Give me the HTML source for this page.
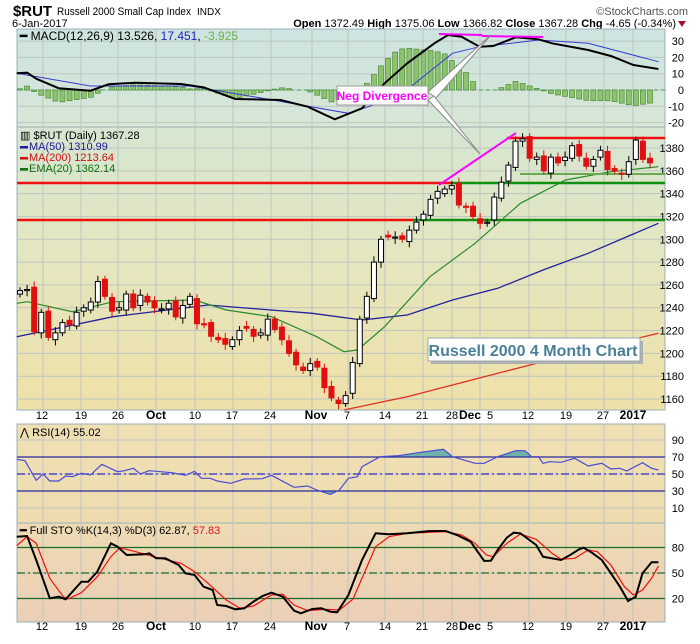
<!DOCTYPE html>
<html><head><meta charset="utf-8">
<style>
html,body{margin:0;padding:0;background:#fff;}
body{width:700px;height:639px;overflow:hidden;font-family:"Liberation Sans",sans-serif;}
svg text{font-family:"Liberation Sans",sans-serif;}
</style></head>
<body>
<svg id="s" width="700" height="639" viewBox="0 0 700 639" xmlns="http://www.w3.org/2000/svg">
<defs>
<linearGradient id="gm" x1="0" y1="0" x2="0" y2="1"><stop offset="0" stop-color="#cde4e0"/><stop offset="1" stop-color="#d7e6d6"/></linearGradient>
<linearGradient id="gp" x1="0" y1="0" x2="0" y2="1"><stop offset="0" stop-color="#d6e6d2"/><stop offset="0.45" stop-color="#e4e6c0"/><stop offset="1" stop-color="#efe0a8"/></linearGradient>
<linearGradient id="gr" x1="0" y1="0" x2="0" y2="1"><stop offset="0" stop-color="#efe0b4"/><stop offset="1" stop-color="#eedcb0"/></linearGradient>
<linearGradient id="gs" x1="0" y1="0" x2="0" y2="1"><stop offset="0" stop-color="#eedbb4"/><stop offset="1" stop-color="#ebcfb6"/></linearGradient>
</defs>
<!-- header -->
<text x="13" y="16" font-size="15" font-weight="bold" fill="#000" textLength="39" lengthAdjust="spacingAndGlyphs">$RUT</text>
<text x="57" y="15" font-size="11" fill="#000" textLength="134" lengthAdjust="spacingAndGlyphs">Russell 2000 Small Cap Index</text>
<text x="197" y="15" font-size="10" fill="#000">INDX</text>
<text x="688" y="15" font-size="11" fill="#555" text-anchor="end">©StockCharts.com</text>
<text x="12" y="27" font-size="11" fill="#000">6-Jan-2017</text>
<text x="676" y="27" font-size="11" text-anchor="end" fill="#000"><tspan font-weight="bold">Open</tspan> 1372.49 <tspan font-weight="bold">High</tspan> 1375.06 <tspan font-weight="bold">Low</tspan> 1366.82 <tspan font-weight="bold">Close</tspan> 1367.28 <tspan font-weight="bold">Chg</tspan> -4.65 (-0.34%)</text>
<path d="M678,21 L686,21 L682,27 Z" fill="#a0102a"/>
<!-- panels -->
<rect x="17" y="29" width="648" height="98" fill="url(#gm)" stroke="#9ab0b4"/>
<rect x="17" y="127" width="648" height="283" fill="url(#gp)" stroke="#9ab0b4"/>
<rect x="17" y="424" width="648" height="99" fill="url(#gr)" stroke="#9ab0b4"/>
<rect x="17" y="523" width="648" height="99" fill="url(#gs)" stroke="#9ab0b4"/>
<g id="grid" stroke="#bfc5c0" stroke-width="1" fill="none"></g>
<g id="lay"></g>
</svg>
<script>
var S=document.getElementById('s'),L=document.getElementById('lay'),G=document.getElementById('grid');
var NS='http://www.w3.org/2000/svg';
function el(t,a,p,txt){var e=document.createElementNS(NS,t);for(var k in a)e.setAttribute(k,a[k]);if(txt!=null)e.textContent=txt;(p||L).appendChild(e);return e;}
function conv(s,off){var a=s.trim().split(/[\s,]+/).map(Number),r=[];for(var i=0;i<a.length;i+=2)r.push([a[i]/2.21,a[i+1]/3+off]);return r;}
function P(r){return r.map(function(p){return p[0].toFixed(1)+','+p[1].toFixed(1)}).join(' ');}
function interp(r,x){if(x<=r[0][0])return r[0][1];for(var i=1;i<r.length;i++){if(x<=r[i][0]){var t=(x-r[i-1][0])/(r[i][0]-r[i-1][0]);return r[i-1][1]+t*(r[i][1]-r[i-1][1]);}}return r[r.length-1][1];}
var gx=[43,81,118,156,195,233,271,312,348,385,423,452,480,529,566,604,633];
gx.forEach(function(x){[[29,127],[127,410],[424,523],[523,622]].forEach(function(b){el('line',{x1:x,x2:x,y1:b[0],y2:b[1]},G);});});
function hy(vals,f,p){vals.forEach(function(v){var y=f(v);el('line',{x1:17,x2:665,y1:y,y2:y},G);el('text',{x:684,y:y+4,'font-size':11,'text-anchor':'end',fill:'#000'},null,String(v));});}
var my=function(v){return 90-v*1.63};
hy([30,20,10,0,-10,-20],my);
var py=function(p){return 148+(1380-p)*1.141};
hy([1380,1360,1340,1320,1300,1280,1260,1240,1220,1200,1180,1160],py);
var ry=function(v){return 474-(v-50)*0.85};
hy([90,70,50,30,10],ry);
var sy=function(v){return 573-(v-50)*0.85};
hy([80,50,20],sy);
var xl=[[42,'12'],[81,'19'],[118,'26'],[156,'Oct',1],[195,'10'],[232,'17'],[270,'24'],[316,'Nov',1],[347,'7'],[385,'14'],[422,'21'],[452,'28'],[470,'Dec',1],[490,'5'],[528,'12'],[566,'19'],[603,'27'],[633,'2017',1]];
[419,630].forEach(function(yy){xl.forEach(function(l){el('text',{x:l[0],y:yy,'font-size':l[2]?12:11,'font-weight':l[2]?'bold':'normal','text-anchor':'middle',fill:'#000'},null,l[1]);});});
var mac=conv("37 220 60 218 80 236 130 265 200 272 240 253 300 248 400 252 450 262 520 297 620 300 680 320 740 358 800 325 850 250 900 190 960 130 990 105 1020 110 1060 140 1090 138 1140 112 1190 118 1220 130 1300 150 1350 168 1400 195 1455 207",0);
var sig=conv("37 220 200 258 420 258 560 290 770 340 880 290 1000 160 1060 140 1130 130 1190 120 1300 130 1455 185",0);
var C=[1255,1256,1219,1236,1214,1218,1227,1225,1236,1240,1245,1263,1250,1237,1240,1252,1240,1251,1245,1240,1239,1244,1232,1242,1250,1226,1225,1215,1212,1208,1212,1220,1222,1215,1218,1230,1221,1212,1200,1190,1185,1191,1188,1170,1161,1156,1163,1192,1230,1250,1280,1300,1302,1302,1300,1308,1315,1322,1335,1342,1344,1347,1330,1328,1320,1314,1315,1337,1350,1365,1386,1388,1371,1372,1360,1372,1367,1372,1382,1373,1364,1370,1378,1361,1360,1357,1368,1387,1370,1367];
var N=C.length,x0=20,dx=(650-20)/(N-1);
for(var i=0;i<N;i++){var x=x0+i*dx;var h=interp(mac,x)-interp(sig,x);h=h*1.6;var y1=Math.min(90,90+h),hh=Math.abs(h);if(hh>0.8)el('rect',{x:x-2.5,y:y1,width:5,height:hh,fill:'#8cc46c',stroke:'#4f8a3a','stroke-width':0.7});}
el('line',{x1:17,x2:665,y1:90,y2:90,stroke:'#4a9a4a','stroke-dasharray':'4,3'});
el('polyline',{points:P(sig),fill:'none',stroke:'#3a3ad0','stroke-width':1});
el('polyline',{points:P(mac),fill:'none',stroke:'#000','stroke-width':2});
el('line',{x1:439,y1:34,x2:482,y2:35,stroke:'#ff00ff','stroke-width':2});
el('line',{x1:482,y1:36,x2:543,y2:37,stroke:'#ff00ff','stroke-width':2});
var t=el('text',{x:20,y:40,'font-size':12,fill:'#000'});t.innerHTML='<tspan font-weight="bold">━</tspan> MACD(12,26,9) 13.526, <tspan fill="#2020c0">17.451</tspan>, <tspan fill="#6bb04a">-3.925</tspan>';
el('polyline',{points:P(conv("37 650 250 590 460 555 690 580 800 600 900 585 1000 540 1100 505 1200 450 1300 400 1455 310",120)),fill:'none',stroke:'#22229a','stroke-width':1.3});
el('polyline',{points:P(conv("37 550 60 545 160 575 250 545 430 540 500 570 600 590 700 650 760 695 790 690 850 620 950 470 1050 370 1150 250 1250 180 1350 155 1455 140",120)),fill:'none',stroke:'#2a8a2a','stroke-width':1.2});
el('polyline',{points:P(conv("760 870 900 830 1100 760 1300 690 1455 640",120)),fill:'none',stroke:'#e03020','stroke-width':1.3});
el('line',{x1:17,x2:452,y1:183,y2:183,stroke:'#f01010','stroke-width':2.5});
el('line',{x1:452,x2:665,y1:183,y2:183,stroke:'#109010','stroke-width':2.5});
el('line',{x1:17,x2:414,y1:220,y2:220,stroke:'#f01010','stroke-width':2.5});
el('line',{x1:414,x2:665,y1:220,y2:220,stroke:'#109010','stroke-width':2.5});
el('line',{x1:507,x2:665,y1:138,y2:138,stroke:'#f01010','stroke-width':2.5});
el('line',{x1:520,x2:665,y1:174,y2:174,stroke:'#6aaa50','stroke-width':2});
for(var i=0;i<N;i++){var x=x0+i*dx,c=C[i],o=i?C[i-1]+((i*7)%5-2):c-3;if(Math.abs(o-c)<1)o=c+1.5;var hi=Math.max(o,c)+3+(i%3),lo=Math.min(o,c)-3-(i%2)*2;var up=c>o,col=up?'#000':'#e01010';
el('line',{x1:x,x2:x,y1:py(hi),y2:py(lo),stroke:col,'stroke-width':1});
var yt=py(Math.max(o,c)),yb=py(Math.min(o,c));el('rect',{x:x-2.5,y:yt,width:5,height:Math.max(1,yb-yt),fill:up?'#fff':'#e01010',stroke:col,'stroke-width':1});}
el('line',{x1:439,y1:185,x2:516,y2:133,stroke:'#ff00ff','stroke-width':2});
var lg=[['$RUT (Daily) 1367.28','#000'],['MA(50) 1310.99','#1a1a9a'],['MA(200) 1213.64','#d01010'],['EMA(20) 1362.14','#107010']];
lg.forEach(function(l,k){var y=139+k*11;if(k)el('rect',{x:20,y:y-4,width:8,height:2.5,fill:l[1]});el('text',{x:k?29:20,y:y,'font-size':11,fill:l[1]},null,(k?'':'▥ ')+l[0]);});
el('rect',{x:431,y:341,width:212,height:23,fill:'#b0b0b0'});
el('rect',{x:428,y:338,width:212,height:23,fill:'#fff',stroke:'#9aa'});
el('text',{x:533,y:356,'font-size':16,'font-weight':'bold','text-anchor':'middle',fill:'#4a7f98'},null,'Russell 2000 4 Month Chart');
el('polygon',{points:'428,92 491,35 436,98',fill:'#fff',stroke:'#888'});
el('polygon',{points:'428,100 480,154 434,96',fill:'#fff',stroke:'#888'});
el('rect',{x:337,y:86,width:91,height:19,fill:'#fff',stroke:'#999'});
el('text',{x:382,y:100,'font-size':12,'font-weight':'bold','text-anchor':'middle',fill:'#ff00ff'},null,'Neg Divergence');
var rsi=conv("37 178 55 182 80 241 95 222 110 243 130 243 145 228 160 230 180 220 200 225 225 193 260 215 275 212 295 205 310 222 330 212 380 218 410 226 430 214 445 235 465 235 480 243 510 250 540 237 580 236 600 226 650 262 680 258 700 270 730 283 750 270 770 235 790 230 800 200 840 170 880 167 930 157 980 148 1000 170 1050 190 1070 190 1100 170 1140 152 1160 152 1175 170 1190 170 1200 190 1215 185 1240 187 1270 175 1300 198 1330 190 1350 207 1370 205 1385 213 1420 188 1440 205 1455 210",400);
var y70=ry(70),y30=ry(30);
var fa=[];for(var x=17;x<=658;x+=1){var y=interp(rsi,x);fa.push([x,Math.min(y,y70)]);}
el('polygon',{points:P([[17,y70]].concat(fa).concat([[658,y70]])),fill:'#6fb3a6'});
var fb=[];for(var x=17;x<=658;x+=1){var y=interp(rsi,x);fb.push([x,Math.max(y,y30)]);}
el('polygon',{points:P([[17,y30]].concat(fb).concat([[658,y30]])),fill:'#6fb3a6'});
el('line',{x1:17,x2:665,y1:y70,y2:y70,stroke:'#2a2aa0','stroke-width':1.3});
el('line',{x1:17,x2:665,y1:y30,y2:y30,stroke:'#2a2aa0','stroke-width':1.3});
el('line',{x1:17,x2:665,y1:ry(50),y2:ry(50),stroke:'#2a2ad0','stroke-width':1.3,'stroke-dasharray':'8,3,2,3'});
el('polyline',{points:P(rsi),fill:'none',stroke:'#4a4ad8','stroke-width':1.2});
el('text',{x:20,y:436,'font-size':11,fill:'#000'},null,'⋀ RSI(14) 55.02');
el('line',{x1:17,x2:665,y1:sy(80),y2:sy(80),stroke:'#1a6a2a','stroke-width':1.3});
el('line',{x1:17,x2:665,y1:sy(20),y2:sy(20),stroke:'#1a6a2a','stroke-width':1.3});
el('line',{x1:17,x2:665,y1:sy(50),y2:sy(50),stroke:'#1a6a2a','stroke-width':1.3,'stroke-dasharray':'8,3,2,3'});
el('polyline',{points:P(conv("37 437 60 410 80 430 110 535 140 590 150 597 180 578 215 530 245 470 265 443 300 455 340 470 400 490 430 515 460 550 500 600 530 625 560 618 600 585 625 583 650 615 680 632 720 628 750 630 780 598 830 440 860 410 900 400 985 395 1020 405 1050 430 1075 465 1090 470 1120 430 1150 402 1185 418 1220 460 1240 478 1270 475 1300 450 1320 455 1350 495 1380 560 1400 585 1420 570 1440 535 1455 498",400)),fill:'none',stroke:'#f01010','stroke-width':1.2});
el('polyline',{points:P(conv("37 410 60 408 80 480 110 595 130 590 145 598 180 545 195 545 215 515 245 430 260 440 280 465 320 463 330 460 345 475 365 475 395 495 410 520 430 525 450 560 470 570 480 615 500 618 520 628 540 625 560 605 580 588 600 578 625 590 650 632 665 640 690 627 710 625 730 635 745 637 770 585 800 480 830 400 860 403 900 400 950 393 985 393 1010 405 1040 425 1070 483 1085 482 1100 450 1120 413 1135 398 1150 400 1185 435 1200 470 1240 480 1260 465 1280 448 1290 443 1310 460 1330 480 1350 520 1370 560 1388 603 1405 590 1420 520 1440 487 1455 487",400)),fill:'none',stroke:'#000','stroke-width':2});
var t2=el('text',{x:20,y:534,'font-size':11,fill:'#000'});t2.innerHTML='<tspan font-weight="bold">━</tspan> Full STO %K(14,3) %D(3) 62.87, <tspan fill="#e01010">57.83</tspan>';
</script>
</body></html>
